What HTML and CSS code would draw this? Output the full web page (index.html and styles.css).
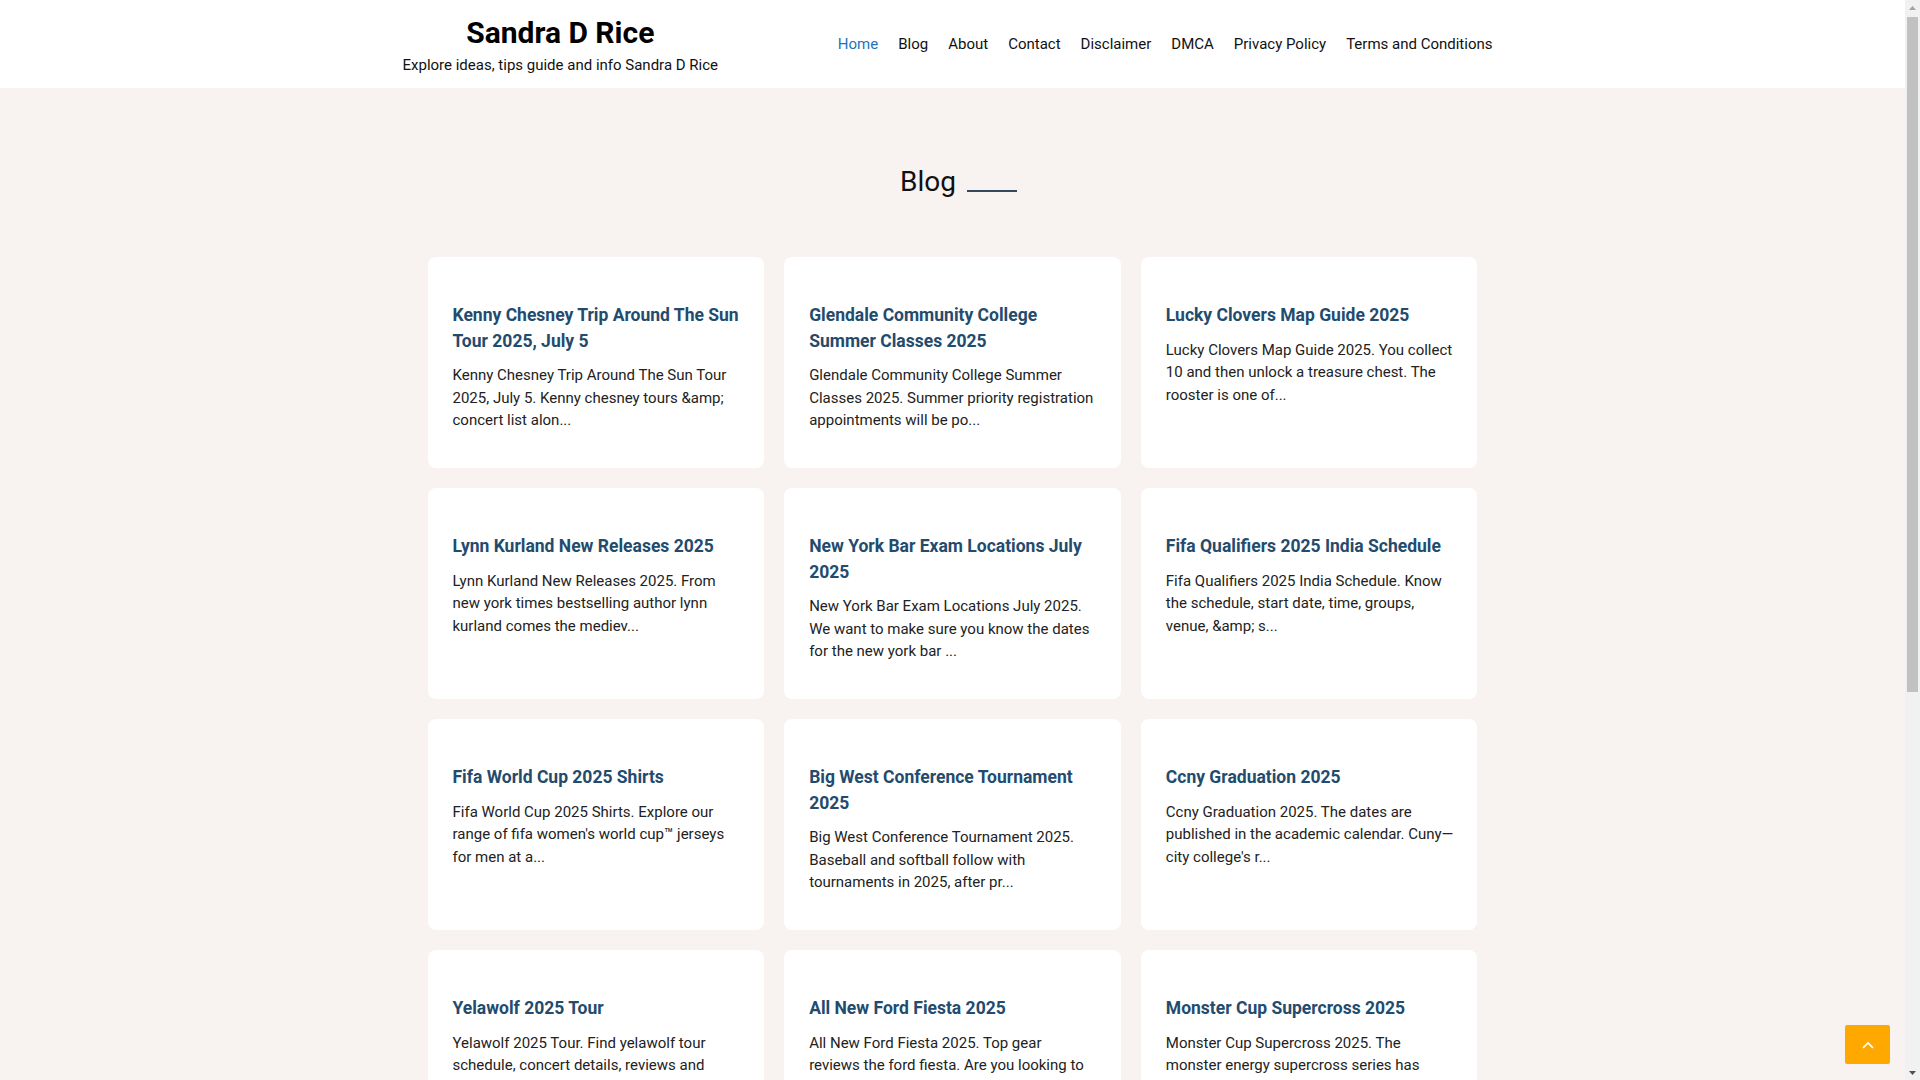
FILE: index.html
```html
<!DOCTYPE html>
<html lang="en">
<head>
<meta charset="utf-8">
<title>Blog - Sandra D Rice</title>
<link rel="stylesheet" href="styles.css">
</head>
<body>
<div class="page-scroll">
<header class="site-header">
  <div class="header-inner">
    <div class="branding">
      <h1 class="site-title">Sandra D Rice</h1>
      <p class="site-tagline">Explore ideas, tips guide and info Sandra D Rice</p>
    </div>
    <nav class="main-nav">
      <a class="nav-link active" href="#">Home</a>
      <a class="nav-link" href="#">Blog</a>
      <a class="nav-link" href="#">About</a>
      <a class="nav-link" href="#">Contact</a>
      <a class="nav-link" href="#">Disclaimer</a>
      <a class="nav-link" href="#">DMCA</a>
      <a class="nav-link" href="#">Privacy Policy</a>
      <a class="nav-link" href="#">Terms and Conditions</a>
    </nav>
  </div>
</header>

<main class="content">
  <div class="page-heading">
    <h2 class="heading-text">Blog</h2>
    <span class="heading-line"></span>
  </div>

  <div class="post-grid">
    <article class="post-card">
      <h3 class="post-title">Kenny Chesney Trip Around The Sun Tour 2025, July 5</h3>
      <p class="post-excerpt">Kenny Chesney Trip Around The Sun Tour 2025, July 5. Kenny chesney tours &amp;amp; concert list alon...</p>
    </article>
    <article class="post-card">
      <h3 class="post-title">Glendale Community College Summer Classes 2025</h3>
      <p class="post-excerpt">Glendale Community College Summer Classes 2025. Summer priority registration appointments will be po...</p>
    </article>
    <article class="post-card">
      <h3 class="post-title">Lucky Clovers Map Guide 2025</h3>
      <p class="post-excerpt">Lucky Clovers Map Guide 2025. You collect 10 and then unlock a treasure chest. The rooster is one of...</p>
    </article>

    <article class="post-card">
      <h3 class="post-title">Lynn Kurland New Releases 2025</h3>
      <p class="post-excerpt">Lynn Kurland New Releases 2025. From new york times bestselling author lynn kurland comes the mediev...</p>
    </article>
    <article class="post-card">
      <h3 class="post-title">New York Bar Exam Locations July 2025</h3>
      <p class="post-excerpt">New York Bar Exam Locations July 2025. We want to make sure you know the dates for the new york bar ...</p>
    </article>
    <article class="post-card">
      <h3 class="post-title">Fifa Qualifiers 2025 India Schedule</h3>
      <p class="post-excerpt">Fifa Qualifiers 2025 India Schedule. Know the schedule, start date, time, groups, venue, &amp;amp; s...</p>
    </article>

    <article class="post-card">
      <h3 class="post-title">Fifa World Cup 2025 Shirts</h3>
      <p class="post-excerpt">Fifa World Cup 2025 Shirts. Explore our range of fifa women's world cup™ jerseys for men at a...</p>
    </article>
    <article class="post-card">
      <h3 class="post-title">Big West Conference Tournament 2025</h3>
      <p class="post-excerpt">Big West Conference Tournament 2025. Baseball and softball follow with tournaments in 2025, after pr...</p>
    </article>
    <article class="post-card">
      <h3 class="post-title">Ccny Graduation 2025</h3>
      <p class="post-excerpt">Ccny Graduation 2025. The dates are published in the academic calendar. Cuny—city college's r...</p>
    </article>

    <article class="post-card">
      <h3 class="post-title">Yelawolf 2025 Tour</h3>
      <p class="post-excerpt">Yelawolf 2025 Tour. Find yelawolf tour schedule, concert details, reviews and photos. Find ti...</p>
    </article>
    <article class="post-card">
      <h3 class="post-title">All New Ford Fiesta 2025</h3>
      <p class="post-excerpt">All New Ford Fiesta 2025. Top gear<br>reviews the ford fiesta. Are you looking to buy a new car?...</p>
    </article>
    <article class="post-card">
      <h3 class="post-title">Monster Cup Supercross 2025</h3>
      <p class="post-excerpt">Monster Cup Supercross 2025. The monster energy supercross series has revealed the schedule for...</p>
    </article>
  </div>

  <div class="pagination">
    <a class="page-link current" href="#">1</a>
    <a class="page-link" href="#">2</a>
    <a class="page-link" href="#">3</a>
    <a class="page-link" href="#">Next</a>
  </div>
</main>

<footer class="site-footer">
  <p class="footer-text">Copyright © 2025 Sandra D Rice. All rights reserved.</p>
</footer>
</div>

<div class="scrollbar" aria-hidden="true">
  <div class="sb-button">
    <svg width="7" height="4" viewBox="0 0 7 4"><path d="M0 4 L3.5 0 L7 4 Z" fill="#a3a3a3"/></svg>
  </div>
  <div class="sb-track">
    <div class="sb-thumb"></div>
  </div>
  <div class="sb-button">
    <svg width="7" height="4" viewBox="0 0 7 4"><path d="M0 0 L7 0 L3.5 4 Z" fill="#505050"/></svg>
  </div>
</div>

<a class="back-to-top" href="#" aria-label="Back to top">
  <svg width="12" height="8" viewBox="0 0 12 8"><path d="M1 6.8 L6 2 L11 6.8" fill="none" stroke="#fff" stroke-width="1.7"/></svg>
</a>
</body>
</html>
```

FILE: styles.css
```css
* {
  box-sizing: border-box;
}

html, body {
  margin: 0;
  padding: 0;
  height: 100%;
  overflow: hidden;
}

body {
  display: flex;
  background: #f8f3f0;
  font-family: Roboto, "Liberation Sans", Arial, sans-serif;
  color: #222;
}

.page-scroll {
  flex: 1;
  min-width: 0;
  height: 100vh;
  overflow: hidden;
}

.scrollbar {
  width: 15px;
  flex: none;
  height: 100vh;
  background: #f1f1f1;
  display: flex;
  flex-direction: column;
}

.sb-button {
  height: 15px;
  display: flex;
  align-items: center;
  justify-content: center;
}

.sb-track {
  flex: 1;
  padding: 2px 2px 0;
}

.sb-thumb {
  height: 675px;
  background: #c1c1c1;
}

a {
  text-decoration: none;
}

.site-header {
  background: #fff;
  height: 88px;
}

.header-inner {
  width: 1100px;
  margin: 0 auto;
  height: 100%;
  display: flex;
  align-items: center;
  justify-content: space-between;
}

.branding {
  text-align: center;
  padding-top: 4px;
}

.site-title {
  margin: 0;
  font-size: 30px;
  line-height: 34px;
  font-weight: 700;
  color: #000;
}

.site-tagline {
  margin: 4px 0 0;
  font-size: 15px;
  line-height: 22px;
  color: #111;
}

.main-nav {
  display: flex;
}

.nav-link {
  padding: 0 10px;
  font-size: 15px;
  line-height: 24px;
  color: #111;
}

.nav-link.active {
  color: #1e73be;
}

.content {
  width: 1050px;
  margin: 0 auto;
}

.page-heading {
  display: flex;
  align-items: flex-end;
  justify-content: center;
  padding: 0 0 58px 12px;
  height: 169px;
}

.heading-text {
  margin: 0;
  font-size: 28px;
  font-weight: 400;
  line-height: 34px;
  color: #111;
}

.heading-line {
  display: block;
  width: 50px;
  height: 2px;
  background: #34495e;
  margin: 0 0 7px 11px;
}

.post-grid {
  display: grid;
  grid-template-columns: repeat(3, 1fr);
  gap: 20px;
}

.post-card {
  background: #fff;
  border-radius: 8px;
  height: 211px;
  padding: 46px 24px 30px 25px;
}

.post-title {
  margin: 0 0 10px;
  font-size: 17.5px;
  line-height: 25.6px;
  font-weight: 700;
  color: #234b6e;
}

.post-excerpt {
  margin: 0;
  font-size: 15px;
  line-height: 22.5px;
  color: #222;
}

.pagination {
  display: flex;
  justify-content: center;
  gap: 10px;
  padding: 80px 0 120px;
}

.page-link {
  min-width: 40px;
  height: 40px;
  padding: 0 12px;
  display: flex;
  align-items: center;
  justify-content: center;
  background: #fff;
  border-radius: 4px;
  color: #234b6e;
  font-size: 15px;
}

.page-link.current {
  background: #234b6e;
  color: #fff;
}

.site-footer {
  background: #fff;
  padding: 130px 0;
  text-align: center;
}

.footer-text {
  margin: 0;
  font-size: 14px;
  color: #444;
}

.back-to-top {
  position: fixed;
  right: 30px;
  bottom: 16px;
  width: 45px;
  height: 39px;
  background: #ffa800;
  border-radius: 2px;
  display: flex;
  align-items: center;
  justify-content: center;
}
```
